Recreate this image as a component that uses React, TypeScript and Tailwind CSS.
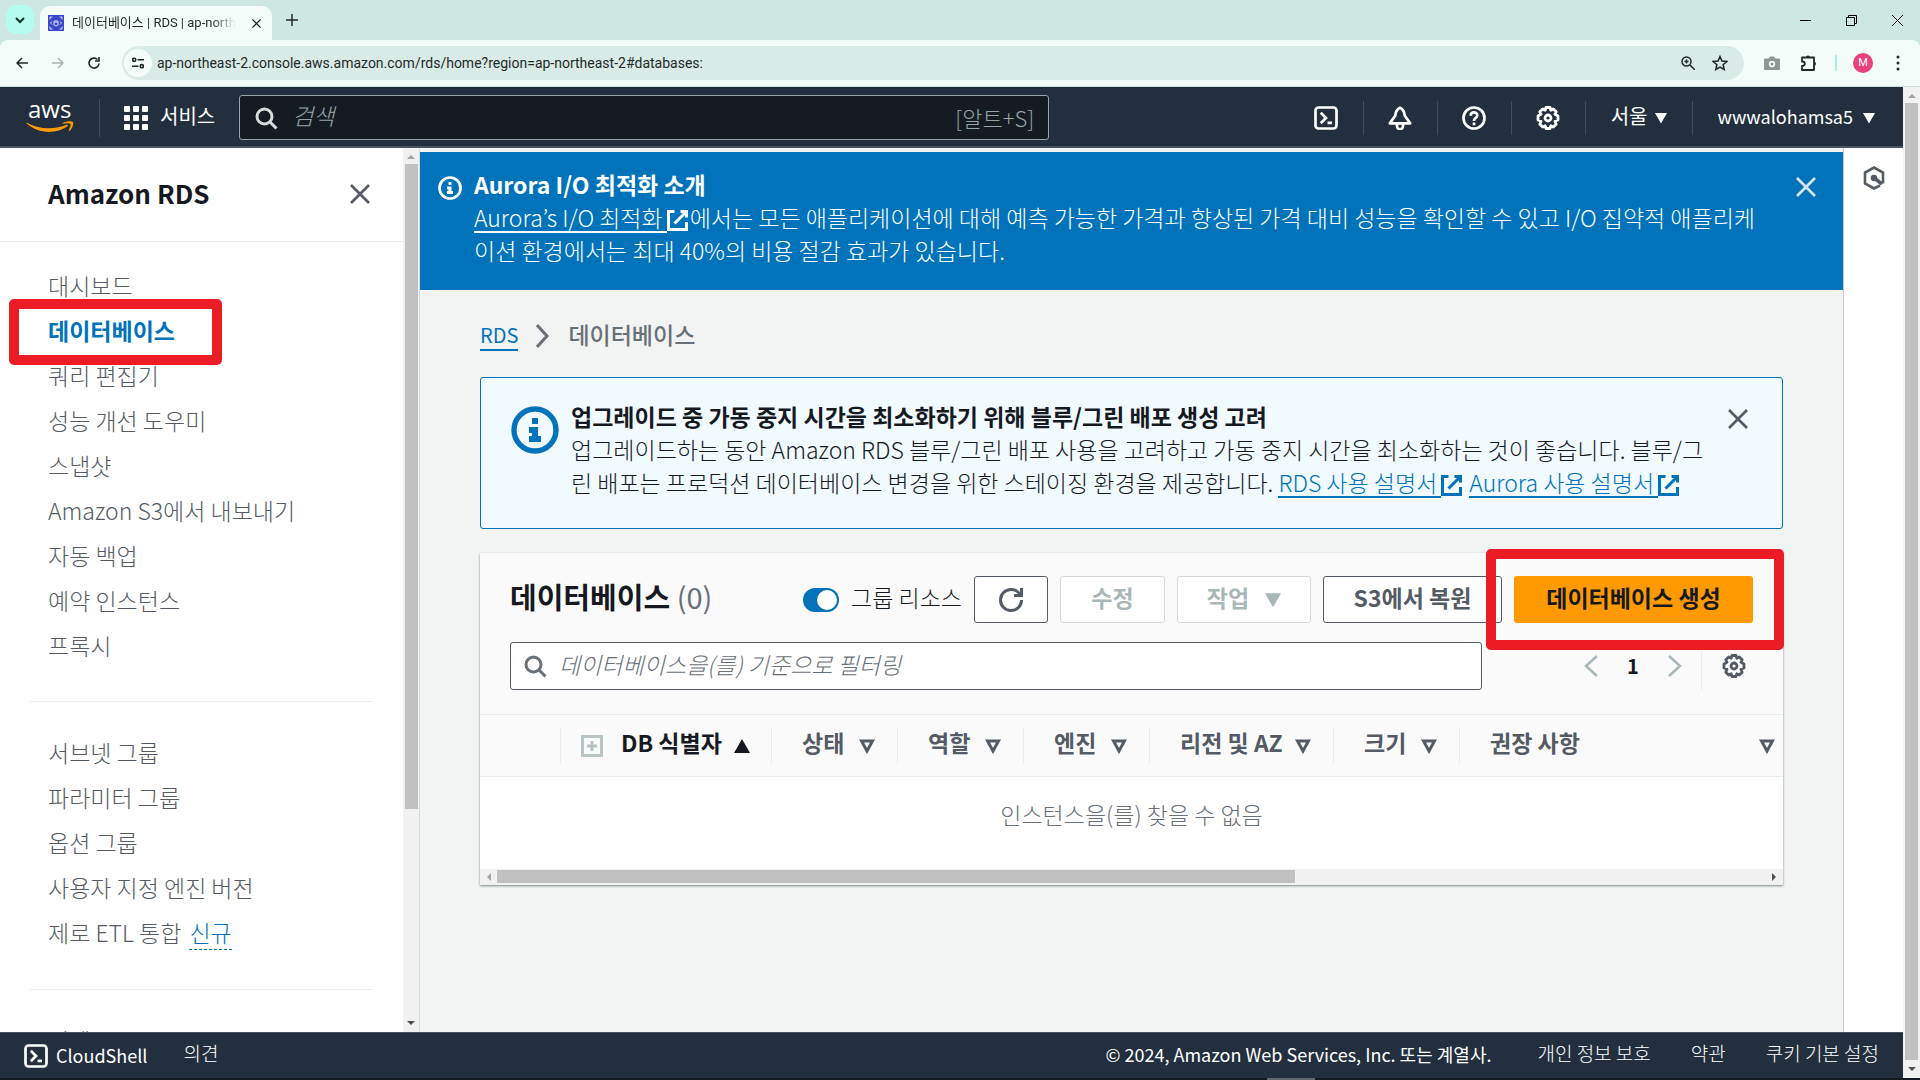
import type { ReactNode } from "react";

const menuTop = [
  "대시보드",
  "데이터베이스",
  "쿼리 편집기",
  "성능 개선 도우미",
  "스냅샷",
  "Amazon S3에서 내보내기",
  "자동 백업",
  "예약 인스턴스",
  "프록시",
];

const menuGroups = ["서브넷 그룹", "파라미터 그룹", "옵션 그룹", "사용자 지정 엔진 버전"];

const columns = [
  { name: "상태", width: "w-[126px]", pad: "pr-[22px]" },
  { name: "역할", width: "w-[126px]", pad: "pr-[22px]" },
  { name: "엔진", width: "w-[126px]", pad: "pr-[22px]" },
  { name: "리전 및 AZ", width: "w-[184px]", pad: "pr-[22px]" },
  { name: "크기", width: "w-[126px]", pad: "pr-[22px]" },
  { name: "권장 사항", width: "", pad: "pr-2" },
];

type IconProps = { className?: string };

const CloseIcon = ({ className = "size-6" }: IconProps) => (
  <svg viewBox="0 0 16 16" className={className} fill="none" stroke="currentColor" strokeWidth="1.800">
    <path d="M2 2l12 12M14 2L2 14" />
  </svg>
);

const SearchIcon = ({ className = "size-6" }: IconProps) => (
  <svg viewBox="0 0 16 16" className={className} fill="none" stroke="currentColor" strokeWidth="2">
    <circle cx="7" cy="7" r="5" />
    <path d="M10.5 10.5L15 15" />
  </svg>
);

const InfoIcon = ({ className = "size-6" }: IconProps) => (
  <svg viewBox="0 0 16 16" className={className} fill="none" stroke="currentColor" strokeWidth="2">
    <circle cx="8" cy="8" r="7" strokeWidth="1.800" />
    <path d="M8 11V8H6M10 11H6" />
    <path d="M8 4v2" />
  </svg>
);

const ExternalIcon = () => (
  <svg viewBox="1 1 14 14" className="mr-0.5 inline size-[21px]" fill="none" stroke="currentColor" strokeWidth="2">
    <path d="M14 9v5H2V2h4M10 2h4v4M6 10l8-8" />
  </svg>
);

const ShellIcon = () => (
  <svg viewBox="0 0 16 16" className="size-6" fill="none" stroke="currentColor" strokeWidth="1.800">
    <rect x="1" y="1" width="14" height="14" rx="2" />
    <path d="M4.500 4.500L8 8l-3.500 3.500M9 11.200h3" />
  </svg>
);

const GearIcon = () => (
  <svg viewBox="0 0 24 24" className="size-6" fill="none" stroke="currentColor" strokeWidth="2.800" strokeLinejoin="round">
    <path d="M10 1.500h4l.8 2.700 2.500-1.300 2.900 2.900-1.300 2.500 3.100 1.700v4l-3.100 1.300 1.300 2.900-2.900 2.900-2.500-1.300L14 22.500h-4l-.8-2.700-2.500 1.300-2.900-2.900 1.300-2.900L2 14v-4l3.100-1.700-1.300-2.500 2.900-2.900 2.500 1.300z" />
    <circle cx="12" cy="12" r="3" />
  </svg>
);

const BellIcon = () => (
  <svg viewBox="0 0 16 16" className="size-6" fill="none" stroke="currentColor" strokeWidth="1.800" strokeLinejoin="round">
    <path d="M8 1.200c-2 1-2.900 2.300-3.200 5.300L1.200 11.600h13.600L11.200 6.500C10.900 3.500 10 2.200 8 1.200z" />
    <path d="M6 12v1.500a2 2 0 0 0 4 0V12" />
  </svg>
);

const HelpIcon = () => (
  <svg viewBox="0 0 16 16" className="size-6" fill="none" stroke="currentColor" strokeWidth="1.800">
    <circle cx="8" cy="8" r="7" />
    <path d="M5.800 6.500c0-3 4.600-2.800 4.400-.2C10.100 7.900 8 7.900 8 10M8 11v1.800" />
  </svg>
);

const SortIcon = () => (
  <svg viewBox="0 0 16 16" className="size-4 shrink-0" fill="none" stroke="currentColor" strokeWidth="3">
    <path d="M2.500 3h11L8 13z" />
  </svg>
);

const Caret = ({ className = "size-3" }: IconProps) => (
  <svg viewBox="0 0 12 12" className={className} fill="currentColor">
    <path d="M0 1h12L6 11.500z" />
  </svg>
);

const Arrow = ({ points }: { points: string }) => (
  <svg viewBox="0 0 10 10" className="size-[10px]" fill="currentColor">
    <polygon points={points} />
  </svg>
);

const ArrowUp = () => <Arrow points="1,7 5,3 9,7" />;
const ArrowDown = () => <Arrow points="1,3 5,7 9,3" />;

const HeaderCell = ({ children, label }: { children: ReactNode; label: string }) => (
  <button aria-label={label} className="flex h-[34px] w-[74px] items-center justify-center border-l border-[#414d5c]">
    {children}
  </button>
);

const BrowserChrome = () => (
  <div className="shrink-0 bg-[#cde8e2] font-[Roboto,'Noto_Sans_CJK_KR',sans-serif] text-[#1f2a28]">
    <div className="flex h-10">
      <button aria-label="탭 검색" className="ml-1.5 mt-[5px] flex h-[29px] w-7 items-center justify-center rounded-[10px] bg-[#b4fdee]">
        <svg viewBox="0 0 10 10" className="size-[10px]" fill="none" stroke="currentColor" strokeWidth="2">
          <path d="M1 3l4 4 4-4" />
        </svg>
      </button>
      <div className="ml-1.5 mt-1.5 flex w-[232px] items-center rounded-t-[10px] bg-[#f4fcfa] px-2">
        <svg viewBox="0 0 16 16" className="mr-2 size-4 shrink-0">
          <rect width="16" height="16" fill="#3b48cc" />
          <path d="M2 4.500V2h2.500M11.500 2H14v2.500M2 11.500V14h2.500M11.500 14H14v-2.500M4 6.500L2.500 8 4 9.500M12 6.500L13.500 8 12 9.500M6 6.500v3.500c1 1 3 1 4 0V6.500M6 6.500c1 1 3 1 4 0-1-1-3-1-4 0" fill="none" stroke="#fff" strokeWidth=".8" />
        </svg>
        <span className="bg-linear-to-r from-[#1f2a28] from-85% to-transparent bg-clip-text text-[13px] whitespace-nowrap text-transparent">
          데이터베이스 | RDS | ap-north
        </span>
        <button aria-label="탭 닫기" className="mr-0.5 ml-auto">
          <CloseIcon className="size-[11px]" />
        </button>
      </div>
      <button aria-label="새 탭" className="ml-3.5">
        <svg viewBox="0 0 12 12" className="size-3" fill="none" stroke="currentColor" strokeWidth="1.500">
          <path d="M6 0v12M0 6h12" />
        </svg>
      </button>
      <div className="ml-auto mr-[17px] flex items-center gap-[35px] text-black">
        <svg viewBox="0 0 11 11" className="size-[11px]" stroke="currentColor"><path d="M0 5.500h11" /></svg>
        <svg viewBox="0 0 11 11" className="size-[11px]" fill="none" stroke="currentColor">
          <path d="M.5 2.500h8v8h-8zM2.500 2.500v-2h8v8h-2" />
        </svg>
        <svg viewBox="0 0 11 11" className="size-[11px]" stroke="currentColor"><path d="M0 0l11 11M11 0L0 11" /></svg>
      </div>
    </div>
    <div className="flex h-[47px] items-center rounded-t-lg border-b border-[#c9dfda] bg-[#f4fcfa] pl-4">
      <div className="flex w-[106px] items-center gap-6">
        <svg viewBox="0 0 12 12" className="size-3 shrink-0" fill="none" stroke="currentColor" strokeWidth="1.500"><path d="M12 6H1M6 1L1 6l5 5" /></svg>
        <svg viewBox="0 0 12 12" className="size-3 shrink-0 text-[#a9b2b0]" fill="none" stroke="currentColor" strokeWidth="1.500"><path d="M0 6h11M6 1l5 5-5 5" /></svg>
        <svg viewBox="0 0 12 12" className="size-3 shrink-0" fill="none" stroke="currentColor" strokeWidth="1.600"><path d="M11 6.500A5 5 0 1 1 9.500 2.500M11 0v4H7" /></svg>
      </div>
      <div className="flex h-[34px] flex-1 items-center rounded-full bg-[#d9ebe7] pl-0.5 pr-4">
        <div className="flex size-[28px] items-center justify-center rounded-full bg-[#f4fcfa]">
          <svg viewBox="0 0 12 12" className="size-3" fill="none" stroke="currentColor" strokeWidth="1.600">
            <circle cx="2.200" cy="2.800" r="1.600" /><path d="M5.500 2.800H12M0 9.200h6.500" /><circle cx="9.800" cy="9.200" r="1.600" />
          </svg>
        </div>
        <input aria-label="주소" className="ml-[5px] flex-1 text-sm outline-none" defaultValue="ap-northeast-2.console.aws.amazon.com/rds/home?region=ap-northeast-2#databases:" />
        <svg viewBox="0 0 14 14" className="size-3.5" fill="none" stroke="currentColor" strokeWidth="1.500"><circle cx="5.500" cy="5.500" r="4.500" /><path d="M9 9l5 5M3.500 5.500h4M5.500 3.500v4" /></svg>
        <svg viewBox="0 0 16 16" className="ml-[17px] size-4" fill="none" stroke="currentColor" strokeWidth="1.500"><path d="M8 1.500l1.900 4.600 4.900.4-3.700 3.200 1.100 4.800L8 12l-4.200 2.500 1.100-4.800L1.200 6.500l4.900-.4z" /></svg>
      </div>
      <div className="flex items-center px-5">
        <svg viewBox="0 0 16 14" className="h-3.5 w-4" fill="#8f9795"><path d="M1 2.500h3.500L6 .5h4l1.500 2H15q1 0 1 1V13q0 1-1 1H1q-1 0-1-1V3.500q0-1 1-1z" /><circle cx="8" cy="8" r="3.200" fill="#f4fcfa" /><circle cx="8" cy="8" r="1.500" /></svg>
        <svg viewBox="0 0 18 18" className="ml-5 size-[18px]" fill="none" stroke="currentColor" strokeWidth="1.800">
          <path d="M2 3.500h12V16H2v-4c1.800 0 2.800-.9 2.800-2.250S3.800 7.500 2 7.500z" strokeLinejoin="round" />
          <path d="M6 3.500a2 2 0 0 1 4 0zM14 7.700a2 2 0 0 1 0 4z" fill="currentColor" stroke="none" />
        </svg>
        <span className="ml-[17px] h-4 w-0.5 bg-[#a9efe3]" />
        <span className="ml-4 flex size-5 items-center justify-center rounded-full bg-[#e8417b] text-[11px] text-white">M</span>
        <svg viewBox="0 0 4 16" className="ml-[23px] h-4 w-1" fill="currentColor"><circle cx="2" cy="2" r="1.500" /><circle cx="2" cy="8" r="1.500" /><circle cx="2" cy="14" r="1.500" /></svg>
      </div>
    </div>
  </div>
);

const TopNav = () => (
  <header className="flex h-[61px] shrink-0 items-center border-b-2 border-[#4a535e] bg-[#232f3e] pt-0.5 text-[20px] text-white">
    <a href="#" aria-label="aws" className="flex w-[100px] flex-col items-start border-r border-[#414d5c] pb-1 pl-[26px]">
      <span className="pl-0.5 font-['Open_Sans',sans-serif] text-2xl leading-5 font-medium">aws</span>
      <svg viewBox="0 0 48 12" className="mt-0.5 h-3 w-12" fill="#f90">
        <path d="M.5 1.500C12 8.500 29 9 41 3.500l1 1.500C30 13.500 12 13 .3 2.300z" />
        <path d="M36.500 2c5-2.500 9.500-2 10.500-1 .8 1.500-.5 6.500-3.500 9l-.8-.4c1.300-3 2.300-5.500 1.800-6.600-.7-1-4.500-.8-8 -.2z" />
      </svg>
    </a>
    <button className="ml-6 flex items-center gap-3">
      <svg viewBox="0 0 24 24" className="size-6" fill="currentColor">
        {[0, 9, 18].map((y) => [0, 9, 18].map((x) => <rect key={`${x}-${y}`} x={x} y={y} width="6" height="6" rx="1" />))}
      </svg>
      <span className="pb-1">서비스</span>
    </button>
    <div className="ml-6 flex h-[45px] w-[810px] items-center rounded-[3px] border border-[#95a5a6] bg-[#161b22] px-3.5">
      <SearchIcon className="size-6 text-[#d5dbdb]" />
      <input aria-label="검색" placeholder="검색" className="ml-3.5 flex-1 pb-1 text-[23px] font-light italic outline-none placeholder:text-[#95a5a6]" />
      <span className="text-[22px] font-light text-[#95a5a6]">[알트+S]</span>
    </div>
    <div className="ml-auto flex items-center">
      <button aria-label="CloudShell" className="mr-[25px]"><ShellIcon /></button>
      <HeaderCell label="알림"><BellIcon /></HeaderCell>
      <HeaderCell label="지원"><HelpIcon /></HeaderCell>
      <HeaderCell label="설정"><GearIcon /></HeaderCell>
      <button className="flex h-[34px] items-center gap-2 border-l border-[#414d5c] px-[25px]"><span className="pb-1">서울</span> <Caret className="size-3" /></button>
      <button className="flex h-[34px] items-center gap-2.5 border-l border-[#414d5c] pl-6 pr-7 text-lg"><span className="pb-1">wwwalohamsa5</span> <Caret className="size-3" /></button>
    </div>
  </header>
);

const Sidebar = () => (
  <nav className="flex w-[420px] shrink-0 bg-white text-[#545b64]">
    <div className="min-w-0 flex-1 overflow-hidden">
      <div className="flex h-[94px] items-center justify-between border-b border-[#eaeded] pl-12 pr-[31px] pb-0.5">
        <h2 className="pb-0.5 text-[26px] font-bold text-[#16191f]">Amazon RDS</h2>
        <button aria-label="닫기"><CloseIcon /></button>
      </div>
      <ul className="mx-[30px] border-b border-[#eaeded] pt-[21px] pb-[33px] pl-[18px] text-[23px] leading-[45px]">
        {menuTop.map((item) =>
          item === "데이터베이스" ? (
            <li key={item} className="relative">
              <a href="#" className="font-bold text-[#0073bb]">{item}</a>
              <span className="absolute -top-[9px] -left-[39px] h-[66px] w-[213px] rounded-[5px] border-[10px] border-[#ec1c24]" />
            </li>
          ) : (
            <li key={item}><a href="#" className="font-light">{item}</a></li>
          )
        )}
      </ul>
      <ul className="mx-[30px] border-b border-[#eaeded] pt-7 pb-[34px] pl-[18px] text-[23px] leading-[45px] font-light">
        {menuGroups.map((item) => (
          <li key={item}><a href="#">{item}</a></li>
        ))}
        <li>
          <a href="#">제로 ETL 통합</a>
          <a href="#" className="ml-2 border-b border-dashed border-[#0073bb] text-[#0073bb]">신규</a>
        </li>
      </ul>
      <ul className="mx-[30px] pt-7 pl-[18px] text-[23px] leading-[45px] font-light">
        <li><a href="#">이벤트</a></li>
      </ul>
    </div>
    <div className="flex w-4 flex-col items-center bg-[#f1f1f1] py-1">
      <span className="text-[#a3a3a3]"><ArrowUp /></span>
      <span className="mt-0.5 h-[645px] w-[13px] bg-[#c1c1c1]" />
      <span className="mt-auto text-[#505050]"><ArrowDown /></span>
    </div>
    <div className="w-px bg-[#d5dbdb]" />
  </nav>
);

const ExternalLink = ({ children }: { children: ReactNode }) => (
  <a href="#">
    <span className="inline-block border-b-2 border-current pr-1 leading-7">{children}</span>
    <ExternalIcon />
  </a>
);

const DatabasePanel = () => (
  <section className="mt-6 bg-white shadow-[0_1px_2px_rgba(0,28,36,0.5)]">
    <div className="bg-[#fafafa] px-[30px] pt-[23px] pb-6">
      <div className="flex h-[47px] items-center font-bold text-[#545b64]">
        <h1 className="pb-1.5 text-[29px] text-[#16191f]">
          데이터베이스 <span className="font-normal text-[#687078]">(0)</span>
        </h1>
        <label className="ml-auto flex items-center gap-3 font-light text-[#16191f]">
          <input type="checkbox" defaultChecked className="peer sr-only" />
          <span className="flex h-6 w-9 justify-end rounded-full bg-[#0073bb] p-0.5">
            <span className="size-5 rounded-full bg-white" />
          </span>
          <span className="pb-1">그룹 리소스</span>
        </label>
        <button aria-label="새로 고침" className="ml-3 flex h-full w-[74px] items-center justify-center rounded-[3px] border border-[#545b64] bg-white">
          <svg viewBox="0 0 16 16" className="size-6" fill="none" stroke="currentColor" strokeWidth="2">
            <path d="M10 5h5V0" /><path d="M15 8a6.960 6.960 0 0 1-7 7 6.960 6.960 0 0 1-7-7 6.960 6.960 0 0 1 7-7 6.870 6.870 0 0 1 6.300 4" />
          </svg>
        </button>
        <button disabled className="ml-3 h-full w-[105px] rounded-[3px] border border-[#d5dbdb] bg-white pb-1 text-[#aab7b8]">수정</button>
        <button disabled className="ml-3 flex h-full w-[134px] items-center justify-center gap-4 rounded-[3px] border border-[#d5dbdb] bg-white text-[#aab7b8]">
          <span className="pb-1">작업</span> <Caret className="size-4" />
        </button>
        <button className="ml-3 h-full w-[179px] rounded-[3px] border border-[#545b64] bg-white pb-1">S3에서 복원</button>
        <div className="relative ml-3 h-full">
          <button className="h-full w-[239px] rounded-[3px] bg-[#ff9900] pb-1 text-[#16191f]">데이터베이스 생성</button>
          <span className="absolute -top-[27px] -left-7 h-[101px] w-[298px] rounded-[5px] border-[10px] border-[#ec1c24]" />
        </div>
      </div>
      <div className="mt-[19px] flex h-12 items-center">
        <div className="flex h-full w-[972px] items-center rounded-[3px] border border-[#545b64] bg-white pl-3 text-[#687078]">
          <SearchIcon />
          <input aria-label="필터" placeholder="데이터베이스을(를) 기준으로 필터링" className="ml-3 flex-1 pb-1 font-light italic outline-none placeholder:text-[#687078]" />
        </div>
        <div className="ml-auto flex items-center text-[#aab7b8]">
          <button aria-label="이전">
            <svg viewBox="0 0 16 24" className="h-6 w-4" fill="none" stroke="currentColor" strokeWidth="2.500"><path d="M14 2L3 12l11 10" /></svg>
          </button>
          <button className="w-[68px] text-xl font-bold text-[#16191f]">1</button>
          <button aria-label="다음">
            <svg viewBox="0 0 16 24" className="h-6 w-4" fill="none" stroke="currentColor" strokeWidth="2.500"><path d="M2 2l11 10L2 22" /></svg>
          </button>
          <button aria-label="기본 설정" className="ml-[18px] flex h-12 items-center border-l border-[#eaeded] pl-5 pr-[7px] text-[#545b64]"><GearIcon /></button>
        </div>
      </div>
    </div>
    <table className="w-full table-fixed text-[#545b64]">
      <thead className="border-y border-[#eaeded] bg-[#fafafa]">
        <tr className="h-[62px]">
          <th aria-label="선택" className="w-20" />
          <th className="w-[211px]">
            <div className="flex h-9 items-center border-l border-[#eaeded] pl-5 text-[#16191f]">
              <svg viewBox="0 0 22 22" className="size-[22px]" fill="none" stroke="#b8c3c4" strokeWidth="3"><path d="M1.500 1.500h19v19h-19zM11 6v10M6 11h10" /></svg>
              <span className="ml-[18px] pb-1.5">DB 식별자</span>
              <svg viewBox="0 0 16 14" className="ml-3 h-3.5 w-4" fill="currentColor"><path d="M0 14L8 0l8 14z" /></svg>
            </div>
          </th>
          {columns.map((col) => (
            <th key={col.name} className={col.width}>
              <div className={`flex h-9 items-center justify-between border-l border-[#eaeded] pl-[30px] ${col.pad}`}>
                <span className="pb-1.5">{col.name}</span> <SortIcon />
              </div>
            </th>
          ))}
        </tr>
      </thead>
      <tbody>
        <tr>
          <td colSpan={8} className="h-[92px] pb-4 text-center font-light text-[#687078]">인스턴스을(를) 찾을 수 없음</td>
        </tr>
      </tbody>
    </table>
    <div className="flex h-4 items-center bg-[#f1f1f1] px-1">
      <span className="rotate-270 text-[#a3a3a3]"><ArrowUp /></span>
      <span className="ml-[3px] h-[13px] w-[798px] bg-[#c1c1c1]" />
      <span className="ml-auto rotate-90 text-[#505050]"><ArrowUp /></span>
    </div>
  </section>
);

const Content = () => (
  <main className="min-w-0 flex-1 overflow-hidden bg-[#f2f3f3] pt-1 text-[23px] leading-[33px] text-[#16191f]">
    <div className="flex items-start bg-[#0073bb] px-[18px] pt-4 pb-[23px] text-white">
      <InfoIcon className="mt-2 size-6 shrink-0" />
      <div className="ml-3 max-w-[1295px] font-light">
        <h3 className="font-bold">Aurora I/O 최적화 소개</h3>
        <p>
          <ExternalLink>Aurora’s I/O 최적화</ExternalLink>
          에서는 모든 애플리케이션에 대해 예측 가능한 가격과 향상된 가격 대비 성능을 확인할 수 있고 I/O 집약적 애플리케이션 환경에서는 최대 40%의 비용 절감 효과가 있습니다.
        </p>
      </div>
      <button aria-label="닫기" className="mt-[7px] mr-[7px] ml-auto text-[#d5e6f2]"><CloseIcon /></button>
    </div>
    <div className="px-[60px] pt-7">
      <nav aria-label="경로" className="flex items-center">
        <a href="#" className="border-b-2 border-[#0073bb] text-xl leading-7 text-[#0073bb]">RDS</a>
        <svg viewBox="0 0 14 24" className="mx-[18px] h-6 w-3.5 text-[#687078]" fill="none" stroke="currentColor" strokeWidth="3"><path d="M1 1l10 11L1 23" /></svg>
        <span className="pb-0.5 font-medium text-[#687078]">데이터베이스</span>
      </nav>
      <div className="mt-6 flex items-start rounded-[3px] border border-[#0073bb] bg-[#f1faff] pt-[22px] pr-8 pb-[29px] pl-[30px]">
        <InfoIcon className="mt-1.5 size-12 shrink-0 text-[#0073bb]" />
        <div className="ml-3 max-w-[1150px] font-light">
          <h3 className="font-bold">업그레이드 중 가동 중지 시간을 최소화하기 위해 블루/그린 배포 생성 고려</h3>
          <p>
            업그레이드하는 동안 Amazon RDS 블루/그린 배포 사용을 고려하고 가동 중지 시간을 최소화하는 것이 좋습니다. 블루/그린 배포는 프로덕션 데이터베이스 변경을 위한 스테이징 환경을 제공합니다.{" "}
            <span className="text-[#0073bb]">
              <ExternalLink>RDS 사용 설명서</ExternalLink> <ExternalLink>Aurora 사용 설명서</ExternalLink>
            </span>
          </p>
        </div>
        <button aria-label="닫기" className="mt-[7px] ml-auto text-[#545b64]"><CloseIcon /></button>
      </div>
      <DatabasePanel />
    </div>
  </main>
);

const Footer = () => (
  <footer className="flex h-[46px] shrink-0 items-center border-t border-[#4a535e] bg-[#232f3e] px-6 text-[19px] text-white">
    <button className="flex items-center gap-2 text-lg"><ShellIcon /> <span className="pb-0.5">CloudShell</span></button>
    <a href="#" className="ml-9 pb-1 font-light">의견</a>
    <span className="ml-auto pb-1 text-lg">© 2024, Amazon Web Services, Inc. 또는 계열사.</span>
    <a href="#" className="ml-[46px] pb-1 font-light">개인 정보 보호</a>
    <a href="#" className="ml-10 pb-1 font-light">약관</a>
    <a href="#" className="ml-10 pb-1 font-light">쿠키 기본 설정</a>
  </footer>
);

const App = () => {
  return (
    <div className="flex h-screen flex-col overflow-hidden bg-white font-['Noto_Sans_CJK_KR',sans-serif]">
      <BrowserChrome />
      <div className="flex min-h-0 flex-1">
        <div className="flex min-w-0 flex-1 flex-col">
          <TopNav />
          <div className="flex min-h-0 flex-1">
            <Sidebar />
            <Content />
            <aside className="flex w-[60px] shrink-0 justify-center border-l border-[#c6cbcb] bg-white pt-[18px] text-[#545b64]">
              <svg viewBox="0 0 24 24" className="size-6" fill="none" stroke="currentColor" strokeWidth="2.600">
                <path d="M18 19.500l-6 3-9-5v-11l9-5 9 5v11" />
                <circle cx="12" cy="12" r="2" fill="currentColor" />
                <path d="M12 12l8 6" strokeWidth="3.500" />
              </svg>
            </aside>
          </div>
          <Footer />
        </div>
        <div className="flex w-[17px] flex-col items-center bg-[#f1f1f1] py-1">
          <span className="text-[#a3a3a3]"><ArrowUp /></span>
          <span className="mt-0.5 w-[13px] flex-1 bg-[#c1c1c1]" />
          <span className="mt-1 text-[#505050]"><ArrowDown /></span>
        </div>
      </div>
      <div className="flex h-0.5 shrink-0 bg-[#131a21]">
        <span className="ml-[66%] w-12 bg-[#5f666c]" />
      </div>
    </div>
  );
};

export default App;
